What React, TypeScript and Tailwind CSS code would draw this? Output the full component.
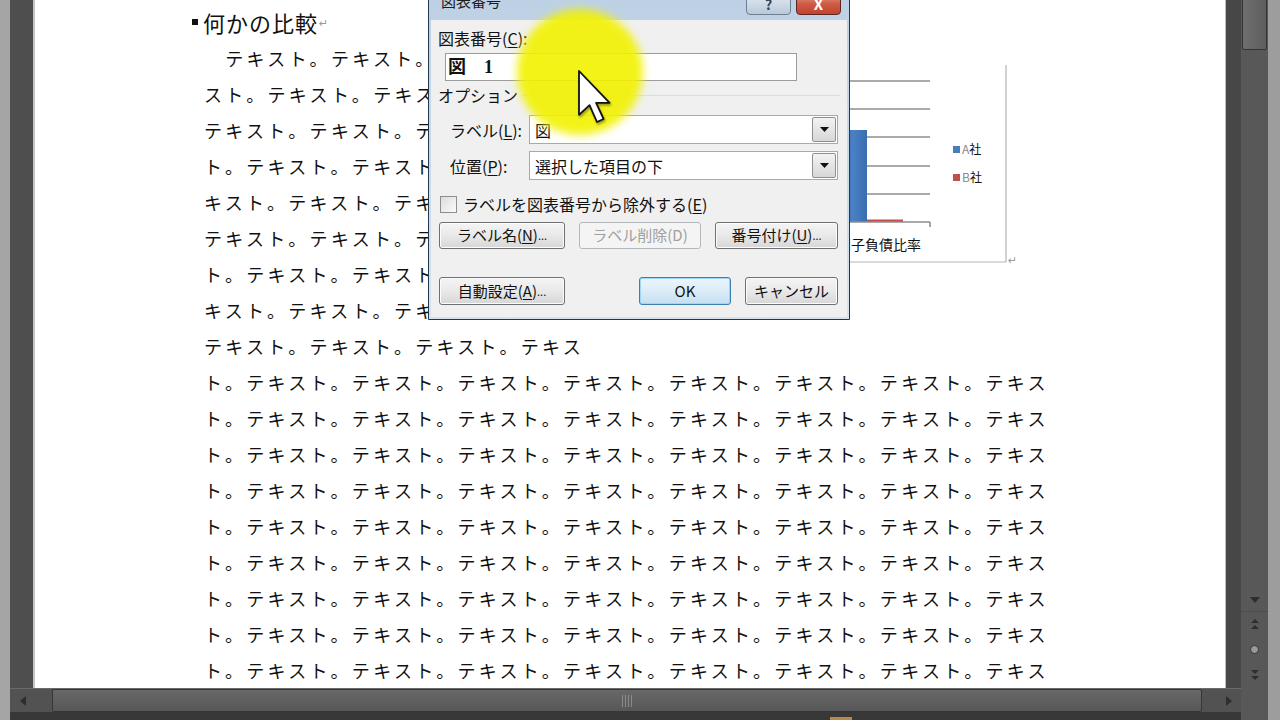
import type { FC, ReactNode } from 'react'

const FULL = 'ト。' + 'テキスト。'.repeat(7) + 'テキス'

// 図の横で折り返している行
const WRAPPED = [
  '\u3000テキスト。テキスト。テキスト。テキ',
  'スト。テキスト。テキスト。テキスト。',
  'テキスト。テキスト。テキスト。テキス',
  'ト。テキスト。テキスト。テキスト。テ',
  'キスト。テキスト。テキスト。テキスト',
  'テキスト。テキスト。テキスト。テキス',
  'ト。テキスト。テキスト。テキスト。テ',
  'キスト。テキスト。テキスト。テキスト',
]

const DocLine: FC<{ children: ReactNode }> = ({ children }) => (
  <div className="h-[36px] leading-[36px] whitespace-nowrap text-[18px] tracking-[3.3px] text-[#111]">
    {children}
  </div>
)

const Chart: FC = () => (
  <svg width={430} height={262} viewBox="590 4 430 262" className="shrink-0">
    <defs>
      <linearGradient id="barA" x1="0" x2="1" y1="0" y2="0">
        <stop offset="0" stopColor="#2f5f9f" />
        <stop offset="0.6" stopColor="#4a80c4" />
        <stop offset="1" stopColor="#3a6db0" />
      </linearGradient>
    </defs>
    <line x1={590} y1={262} x2={1006} y2={262} stroke="#b4b4b4" strokeWidth={1.2} />
    <line x1={1006} y1={65} x2={1006} y2={262} stroke="#b4b4b4" strokeWidth={1.2} />
    {[81, 109, 137, 166, 194].map((y) => (
      <line key={y} x1={640} y1={y} x2={930} y2={y} stroke="#8e8e8e" strokeWidth={1.6} />
    ))}
    <rect x={832} y={130} width={35} height={92} fill="url(#barA)" />
    <rect x={867} y={219.5} width={36} height={2.5} fill="#c0504d" />
    <line x1={640} y1={222} x2={930} y2={222} stroke="#8e8e8e" strokeWidth={1.6} />
    <line x1={930} y1={222} x2={930} y2={227} stroke="#8e8e8e" strokeWidth={1.6} />
    <text x={872} y={250} fontSize={14} textAnchor="middle" fill="#111" fontFamily="'Noto Sans CJK JP', sans-serif">
      有利子負債比率
    </text>
    <rect x={953} y={146} width={7} height={7} fill="#4a7ebb" />
    <rect x={953} y={174} width={7} height={7} fill="#c0504d" />
    <text x={962} y={154} fontSize={12} fill="#111" fontFamily="'Noto Sans CJK JP', sans-serif">
      <tspan fill="#8a8a8a">A</tspan>社
    </text>
    <text x={962} y={182} fontSize={12} fill="#111" fontFamily="'Noto Sans CJK JP', sans-serif">
      <tspan fill="#8a8a8a">B</tspan>社
    </text>
    <text x={1008} y={264} fontSize={11} fill="#9a9a9a" fontFamily="'DejaVu Sans', sans-serif">
      ↵
    </text>
  </svg>
)

const Key: FC<{ k: string }> = ({ k }) => (
  <>
    (<span className="underline underline-offset-2">{k}</span>)
  </>
)

const WinButton: FC<{
  children: ReactNode
  className?: string
  disabled?: boolean
  primary?: boolean
}> = ({ children, className = '', disabled, primary }) => (
  <div
    className={`flex items-center justify-center rounded-[3px] border text-[15px] ${
      disabled
        ? 'border-[#b5b8bb] bg-[#f4f4f4] text-[#a0a0a0]'
        : primary
          ? 'border-[#3c7fb1] bg-linear-to-b from-[#eaf6fd] via-[#dcecf7] to-[#c4e0f2] text-[#111] shadow-[inset_0_0_0_1px_#9fd5f5]'
          : 'border-[#707070] bg-linear-to-b from-[#f4f4f4] via-[#e9e9e9] to-[#d6d6d6] text-[#111] shadow-[inset_0_0_0_1px_#fcfcfc]'
    } ${className}`}
  >
    {children}
  </div>
)

const Combo: FC<{ value: string }> = ({ value }) => (
  <div className="flex h-[29px] w-[309px] items-center border border-[#a9a9a9] bg-white">
    <span className="flex-1 pl-[5px] text-[16px] text-[#111]">{value}</span>
    <div className="mr-[1px] flex h-[25px] w-[24px] items-center justify-center rounded-[2px] border border-[#8f8f8f] bg-linear-to-b from-[#f3f3f3] to-[#d7d7d7]">
      <svg width={9} height={5} viewBox="0 0 9 5">
        <path d="M0 0 H9 L4.5 5 Z" fill="#111" />
      </svg>
    </div>
  </div>
)

const CaptionDialog: FC = () => (
  <div className="absolute left-[428px] top-[-14px] flex h-[334px] w-[422px] flex-col rounded-t-[6px] border border-[#23384a] bg-linear-to-b from-[#bcd0e4] to-[#d6e3ef] px-[2px] pb-[2px] font-['Noto_Sans_CJK_JP',sans-serif]">
    {/* タイトルバー */}
    <div className="relative flex h-[33px] shrink-0 items-start pl-[10px] pt-[3px] text-[15px] text-[#1b1b1b]">
      図表番号
      <div className="absolute right-[56px] top-[6px] flex h-[22px] w-[45px] items-center justify-center rounded-b-[4px] border border-[#6f7f90] bg-linear-to-b from-[#e3ebf3] to-[#b9c9d9] text-[14px] font-bold text-[#30455b]">
        ?
      </div>
      <div className="absolute right-[6px] top-[6px] flex h-[22px] w-[45px] items-center justify-center rounded-b-[4px] border border-[#5c2622] bg-linear-to-b from-[#e39a86] via-[#cf5a45] to-[#c2422f] text-[15px] font-bold text-white">
        X
      </div>
    </div>

    {/* 本体 */}
    <div className="flex flex-1 flex-col bg-[#f0f0f0] px-[7px] pt-[10px] text-[16px] text-[#111]">
      <div className="h-[17px] leading-[17px]">
        図表番号<Key k="C" />:
      </div>
      <div className="ml-[7px] mt-[6px] flex h-[28px] w-[352px] items-center border border-[#9c9c9c] bg-white pl-[2px] font-['Liberation_Serif','Noto_Sans_CJK_JP',serif] text-[18px] font-bold">
        図{'\u3000'}1
      </div>
      <div className="mt-[6px] flex h-[17px] items-center leading-[17px]">
        <span>オプション</span>
        <div className="ml-[4px] h-px flex-1 bg-[#d8dde2]" />
      </div>
      <div className="mt-[11px] flex items-center">
        <span className="ml-[12px] w-[79px]">
          ラベル<Key k="L" />:
        </span>
        <Combo value="図" />
      </div>
      <div className="mt-[7px] flex items-center">
        <span className="ml-[12px] w-[79px]">
          位置<Key k="P" />:
        </span>
        <Combo value="選択した項目の下" />
      </div>
      <div className="mt-[16px] flex h-[17px] items-center">
        <div className="ml-[2px] h-[17px] w-[17px] border border-[#8e8f8f] bg-linear-to-br from-[#dcdcdc] to-[#fbfbfb]" />
        <span className="ml-[6px] leading-[17px]">
          ラベルを図表番号から除外する<Key k="E" />
        </span>
      </div>
      <div className="mt-[9px] flex h-[27px] items-stretch">
        <WinButton className="ml-[1px] w-[126px]">
          ラベル名<Key k="N" />
          <span className="text-[11px]">...</span>
        </WinButton>
        <WinButton disabled className="ml-[14px] w-[122px]">
          ラベル削除(D)
        </WinButton>
        <WinButton className="ml-[14px] w-[123px]">
          番号付け<Key k="U" />
          <span className="text-[11px]">...</span>
        </WinButton>
      </div>
      <div className="mt-[28px] flex h-[28px] items-stretch">
        <WinButton className="ml-[1px] w-[126px]">
          自動設定<Key k="A" />
          <span className="text-[11px]">...</span>
        </WinButton>
        <WinButton primary className="ml-[74px] w-[92px]">
          OK
        </WinButton>
        <WinButton className="ml-[14px] w-[93px]">キャンセル</WinButton>
      </div>
    </div>
  </div>
)

const Arrow: FC<{ d: string }> = ({ d }) => (
  <svg width={12} height={12} viewBox="0 0 12 12">
    <path d={d} fill="#2e2e2e" />
  </svg>
)

export default function App() {
  return (
    <div className="relative flex h-[720px] w-[1280px] overflow-hidden bg-[#4a4a4a] font-['Noto_Sans_CJK_JP',sans-serif]">
      <div className="w-[10px] shrink-0 bg-[#a5a5a5]" />

      <div className="flex w-[1231px] shrink-0 flex-col">
        <div className="flex h-[688px] shrink-0">
          <div className="w-[23px] shrink-0 bg-[#4e4e4e]" />
          <div className="w-[2px] shrink-0 bg-[#c4c4c4]" />

          {/* 文書ページ */}
          <div className="w-[1190px] shrink-0 overflow-hidden bg-white pl-[169px] pt-[4px]">
            <div className="flex items-start">
              <div className="flex w-[386px] shrink-0 flex-col">
                <div className="flex h-[36px] items-center">
                  <div className="-ml-[12px] mr-[5px] h-[6px] w-[6px] bg-[#111]" />
                  <span className="text-[22px] tracking-[1px] text-[#111]">何かの比較</span>
                  <span className="ml-[1px] mt-[4px] font-['DejaVu_Sans',sans-serif] text-[11px] text-[#999]">↵</span>
                </div>
                {WRAPPED.map((t, i) => (
                  <DocLine key={i}>{t}</DocLine>
                ))}
              </div>
              <Chart />
            </div>
            <DocLine>テキスト。テキスト。テキスト。テキス</DocLine>
            {Array.from({ length: 9 }).map((_, i) => (
              <DocLine key={i}>{FULL}</DocLine>
            ))}
          </div>

          <div className="w-[1px] shrink-0 bg-[#bdbdbd]" />
          <div className="w-[15px] shrink-0 bg-[#474747]" />
        </div>

        {/* 横スクロールバー */}
        <div className="flex h-[24px] shrink-0 border-t border-[#6a6a6a] bg-[#525252]">
          <div className="flex w-[42px] shrink-0 items-center pl-[7px]">
            <Arrow d="M3 6 L9 1 V11 Z" />
          </div>
          <div className="flex w-[1150px] shrink-0 items-center justify-start rounded-[2px] border border-[#363636] bg-linear-to-b from-[#686868] to-[#575757]">
            <div className="ml-[569px] flex h-[12px] gap-[2px]">
              {[0, 1, 2, 3].map((i) => (
                <div key={i} className="w-[1px] bg-[#8a8a8a]" />
              ))}
            </div>
          </div>
          <div className="flex flex-1 items-center justify-end pr-[6px]">
            <Arrow d="M9 6 L3 1 V11 Z" />
          </div>
        </div>
        <div className="relative flex-1 bg-[#383838]">
          <div className="absolute left-[820px] top-[5px] h-[3px] w-[22px] bg-[#b8894a]" />
        </div>
      </div>

      {/* 縦スクロールバー */}
      <div className="flex w-[27px] shrink-0 flex-col bg-[#585858]">
        <div className="mx-[1px] mt-[-4px] h-[54px] rounded-[2px] border border-[#333] bg-linear-to-r from-[#6e6e6e] to-[#5e5e5e]" />
        <div className="flex-1" />
        <div className="flex h-[24px] items-center justify-center border-b border-[#4c4c4c]">
          <Arrow d="M1 3 H11 L6 9 Z" />
        </div>
        <div className="flex h-[25px] items-center justify-center">
          <Arrow d="M6 0 L10 4 H2 Z M6 6 L10 10 H2 Z" />
        </div>
        <div className="flex h-[25px] items-center justify-center">
          <div className="h-[9px] w-[9px] rounded-full border border-[#333] bg-[#9a9a9a]" />
        </div>
        <div className="flex h-[25px] items-center justify-center">
          <Arrow d="M2 1 H10 L6 5 Z M2 7 H10 L6 11 Z" />
        </div>
        <div className="h-[33px]" />
      </div>

      <div className="w-[12px] shrink-0 bg-[#9d9d9d]" />

      <CaptionDialog />

      {/* カーソル強調 */}
      <div className="absolute left-[517px] top-[9px] h-[126px] w-[126px] rounded-full bg-[#f2f200] opacity-90 blur-[4px]" />
      <svg className="absolute left-[576px] top-[68px] drop-shadow-[1px_2px_1px_rgba(0,0,0,0.35)]" width={36} height={57} viewBox="0 0 12 19">
        <path
          d="M1 1 L1 15.6 L4.5 12.4 L7 18 L9.2 17 L6.7 11.6 L11.2 11.6 Z"
          fill="white"
          stroke="#111"
          strokeWidth={0.6}
          strokeLinejoin="round"
        />
      </svg>
    </div>
  )
}
